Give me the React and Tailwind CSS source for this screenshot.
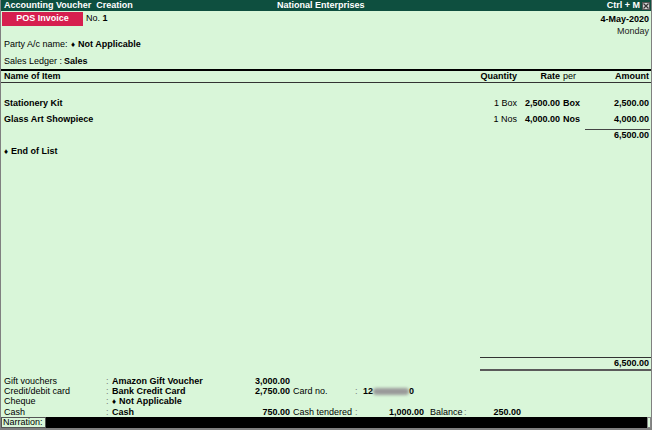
import React from "react";

const items = [
  { name: "Stationery Kit", qty: "1 Box", rate: "2,500.00", per: "Box", amount: "2,500.00" },
  { name: "Glass Art Showpiece", qty: "1 Nos", rate: "4,000.00", per: "Nos", amount: "4,000.00" },
];

const Diamond = () => <span className="text-[8px] mr-[3px]">♦</span>;

const App = () => {
  return (
    <div className="w-[652px] h-[430px] bg-[#d9f6d9] flex flex-col border-x border-b-2 border-[#808080] font-['Liberation_Sans',Arial,sans-serif] text-[9px] text-black overflow-hidden">
      {/* title bar */}
      <div className="h-[11px] bg-[#0e4f3f] text-white font-bold flex items-center leading-[11px] shrink-0">
        <div className="w-[276px] pl-[3px] whitespace-pre">Accounting Voucher  Creation</div>
        <div className="flex-1">National Enterprises</div>
        <div className="mr-[2px]">Ctrl + M</div>
        <span className="w-[8px] h-[8px] bg-[#d4d4d4] border border-[#555] flex items-center justify-center mr-[1px]">
          <svg width="6" height="6" viewBox="0 0 6 6">
            <path d="M0.5 0.5 L5.5 5.5 M5.5 0.5 L0.5 5.5" stroke="#333" strokeWidth="1.2" />
          </svg>
        </span>
      </div>

      {/* voucher head */}
      <div className="flex justify-between pt-[1px] pr-[2px] h-[27px] shrink-0">
        <div className="flex items-center h-[14px]">
          <div className="ml-[1px] w-[81px] h-[14px] bg-[#d61f4f] text-white font-bold flex items-center justify-center">
            POS Invoice
          </div>
          <div className="ml-[3px]">
            No. <span className="font-bold">1</span>
          </div>
        </div>
        <div className="text-right leading-[12px] pt-[1px]">
          <div className="font-bold">4-May-2020</div>
          <div className="text-[#222]">Monday</div>
        </div>
      </div>
      <div className="pl-[3px] leading-[12px] flex">
        <span className="w-[67px]">Party A/c name:</span>
        <span className="font-bold">
          <Diamond />
          Not Applicable
        </span>
      </div>
      <div className="pl-[3px] leading-[12px] mt-[4px] flex">
        <span className="w-[60px] whitespace-pre">Sales Ledger : </span>
        <span className="font-bold">Sales</span>
      </div>

      {/* table header */}
      <div className="mt-[2px] border-t-2 border-black border-b border-b-[#333] h-[14px] flex items-center font-bold pr-[2px] leading-[11px] shrink-0">
        <div className="flex-1 pl-[3px]">Name of Item</div>
        <div className="w-[60px] text-right">Quantity</div>
        <div className="w-[43px] text-right">Rate</div>
        <div className="w-[25px] pl-[3px] font-normal">per</div>
        <div className="w-[64px] text-right">Amount</div>
      </div>

      {/* rows */}
      <div className="mt-[12px]">
        {items.map((it) => (
          <div key={it.name} className="flex leading-[16px] pr-[2px]">
            <div className="flex-1 pl-[3px] font-bold">{it.name}</div>
            <div className="w-[60px] text-right">{it.qty}</div>
            <div className="w-[43px] text-right font-bold">{it.rate}</div>
            <div className="w-[25px] pl-[3px] font-bold">{it.per}</div>
            <div className="w-[64px] text-right font-bold">{it.amount}</div>
          </div>
        ))}
      </div>
      <div className="flex justify-end mt-[2px] pr-[1px]">
        <div className="w-[65px] border-t border-[#444] text-right font-bold leading-[10px] pr-[1px]">6,500.00</div>
      </div>
      <div className="mt-[5px] pl-[3px] leading-[12px] font-bold">
        <Diamond />
        End of List
      </div>

      <div className="flex-1" />

      {/* grand total */}
      <div className="ml-auto w-[171px] border-t border-[#333] border-b-2 border-b-[#5a5a5a] h-[14px] leading-[11px] text-right font-bold pr-[2px] shrink-0">
        6,500.00
      </div>

      {/* payment details */}
      <div className="mt-[5px] leading-[10px] shrink-0">
        <div className="flex">
          <div className="w-[105px] pl-[3px]">Gift vouchers</div>
          <div className="w-[6px] text-[#777]">:</div>
          <div className="w-[118px] font-bold">Amazon Gift Voucher</div>
          <div className="w-[60px] text-right font-bold">3,000.00</div>
        </div>
        <div className="flex">
          <div className="w-[105px] pl-[3px]">Credit/debit card</div>
          <div className="w-[6px] text-[#777]">:</div>
          <div className="w-[118px] font-bold">Bank Credit Card</div>
          <div className="w-[60px] text-right font-bold">2,750.00</div>
          <div className="w-[65px] pl-[3px]">Card no.</div>
          <div className="w-[8px] text-[#777]">:</div>
          <div className="flex items-center font-bold">
            12
            <span className="inline-block w-[36px] h-[7px] bg-[#9a9a9a] blur-[1.5px] rounded-full" />
            0
          </div>
        </div>
        <div className="flex">
          <div className="w-[105px] pl-[3px]">Cheque</div>
          <div className="w-[6px] text-[#777]">:</div>
          <div className="w-[118px] font-bold">
            <Diamond />
            Not Applicable
          </div>
        </div>
        <div className="flex">
          <div className="w-[105px] pl-[3px]">Cash</div>
          <div className="w-[6px] text-[#777]">:</div>
          <div className="w-[118px] font-bold">Cash</div>
          <div className="w-[60px] text-right font-bold">750.00</div>
          <div className="w-[65px] pl-[3px]">Cash tendered</div>
          <div className="w-[8px] text-[#777]">:</div>
          <div className="w-[61px] text-right font-bold">1,000.00</div>
          <div className="w-[40px] pl-[6px]">Balance</div>
          <div className="w-[5px] text-[#777]">:</div>
          <div className="w-[52px] text-right font-bold">250.00</div>
        </div>
      </div>

      {/* narration */}
      <div className="flex h-[11px] shrink-0">
        <div className="w-[45px] bg-[#d9f6d9] border border-[#555] leading-[9px] pl-[1px]">Narration:</div>
        <div className="flex-1 bg-black" />
        <div className="w-[4px] bg-[#d9f6d9] border border-[#888]" />
      </div>
    </div>
  );
};

export default App;
